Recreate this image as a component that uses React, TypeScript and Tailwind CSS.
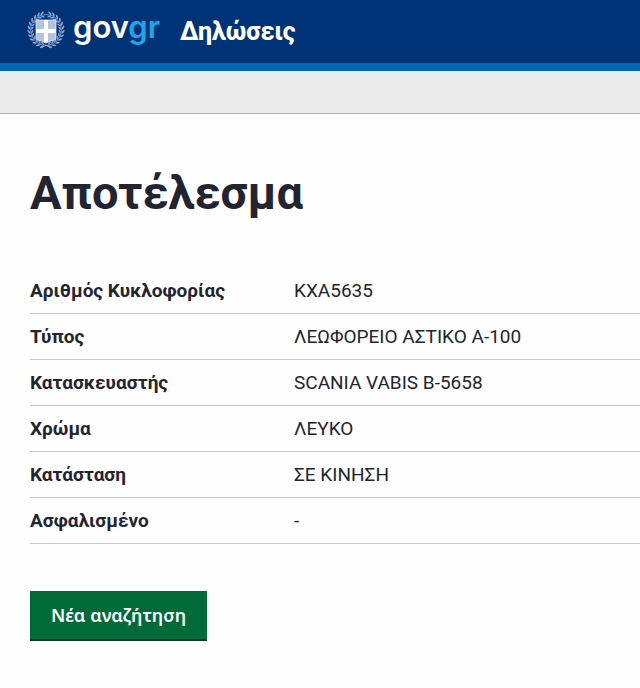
import React from 'react';

interface DetailRow {
  label: string;
  value: string;
}

const details: DetailRow[] = [
  { label: 'Αριθμός Κυκλοφορίας', value: 'KXA5635' },
  { label: 'Τύπος', value: 'ΛΕΩΦΟΡΕΙΟ ΑΣΤΙΚΟ Α-100' },
  { label: 'Κατασκευαστής', value: 'SCANIA VABIS B-5658' },
  { label: 'Χρώμα', value: 'ΛΕΥΚΟ' },
  { label: 'Κατάσταση', value: 'ΣΕ ΚΙΝΗΣΗ' },
  { label: 'Ασφαλισμένο', value: '-' },
];

const leafAngles = [14, 28, 42, 56, 70, 84, 98, 112, 126, 140, 154, 167];

function Emblem() {
  return (
    <svg viewBox="0 0 38 40" className="h-10 w-[38px] shrink-0" fill="none" aria-hidden="true">
      {/* Laurel wreath */}
      <circle cx="19" cy="20" r="15.5" stroke="#6f8fc2" strokeWidth="1" />
      {[1, -1].map((side) =>
        leafAngles.map((angle) => (
          <g key={`${side}-${angle}`} transform={`rotate(${180 + side * angle} 19 20)`}>
            <ellipse cx="19" cy="2.8" rx="0.8" ry="2.2" fill="#9fb5da" transform={`rotate(${side * 55} 19 2.8)`} />
            <ellipse cx="19" cy="6.2" rx="0.8" ry="2" fill="#86a1cf" transform={`rotate(${side * 120} 19 6.2)`} />
          </g>
        ))
      )}
      <path d="M14 38l5-3 5 3" stroke="#9fb5da" />
      {/* Shield */}
      <path d="M9 10h20v18c0 2-2 2-5 3l-5 2-5-2c-3-1-5-1-5-3z" fill="#b3c4e0" />
      <path d="M17 10h4v9h8v4h-8v9l-2 1-2-1v-9H9v-4h8z" fill="#fff" />
      <path d="M9 10h20v18c0 2-2 2-5 3l-5 2-5-2c-3-1-5-1-5-3z" stroke="#e5edf8" strokeWidth="0.8" />
    </svg>
  );
}

function Header() {
  return (
    <header>
      <div className="flex h-[71px] items-start border-b-8 border-[#0065b3] bg-[#003375] pt-2.5 pl-[27px]">
        <a href="#" aria-label="govgr" className="flex items-start gap-2">
          <Emblem />
          <span className="font-['Inter',sans-serif] text-[31px] leading-[34px] font-semibold text-white">
            gov<span className="text-[#1fa5eb]">gr</span>
          </span>
        </a>
        <a href="#" className="ml-5 text-[25px] leading-[44px] font-extrabold text-white">
          Δηλώσεις
        </a>
      </div>
      <div className="h-[43px] border-b border-[#b1b4b6] bg-[#ebebeb]" />
    </header>
  );
}

export default function App() {
  return (
    <div className="min-h-screen bg-[#fefefe] font-['Roboto',sans-serif] text-[#222531]">
      <Header />
      <main className="pt-[49px] pb-12 pl-[30px]">
        <h1 className="text-[47px] leading-[60px] font-bold">Αποτέλεσμα</h1>

        <dl className="mt-[45px] text-[19px] leading-[25px]">
          {details.map((row) => (
            <div key={row.label} className="flex border-b border-[#c6c8ca] py-2.5">
              <dt className="w-[264px] shrink-0 font-bold">{row.label}</dt>
              <dd>{row.value}</dd>
            </div>
          ))}
        </dl>

        <button
          type="button"
          className="mt-[47px] border-b-2 border-[#1c3328] bg-[#006a38] px-[21px] py-3 font-['Noto_Sans',sans-serif] text-[18px] leading-6 font-semibold text-white"
        >
          Νέα αναζήτηση
        </button>
      </main>
    </div>
  );
}
